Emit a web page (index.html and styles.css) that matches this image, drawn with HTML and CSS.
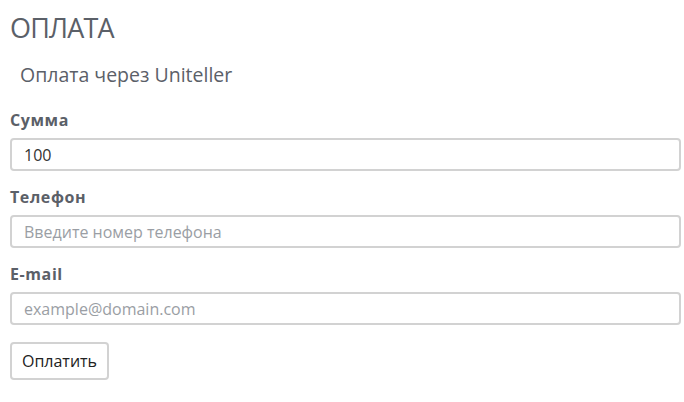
FILE: index.html
```html
<!DOCTYPE html>
<html lang="ru">
<head>
    <meta charset="utf-8">
    <title>Оплата</title>
    <link rel="stylesheet" href="styles.css">
</head>
<body>
    <h1 class="page-title">ОПЛАТА</h1>
    <p class="subtitle">Оплата через Uniteller</p>
    <form class="pay-form">
        <div class="field">
            <label for="sum">Сумма</label>
            <input type="text" id="sum" value="100">
        </div>
        <div class="field">
            <label for="phone">Телефон</label>
            <input type="text" id="phone" placeholder="Введите номер телефона">
        </div>
        <div class="field">
            <label for="email">E-mail</label>
            <input type="text" id="email" placeholder="example@domain.com">
        </div>
        <button type="button" class="pay-btn">Оплатить</button>
    </form>
</body>
</html>
```

FILE: styles.css
```css
body {
    margin: 0;
    padding: 0 3px 0 10px;
    background: #fff;
    color: #5b6068;
    font-family: "Open Sans", "Noto Sans", sans-serif;
}
.page-title {
    margin: 0;
    padding-top: 11px;
    font-size: 27px;
    font-weight: 400;
    line-height: 34px;
    letter-spacing: -0.8px;
}
.subtitle {
    margin: 0;
    padding: 17px 0 0 10px;
    font-size: 19.5px;
    line-height: 26px;
}
.pay-form {
    display: flex;
    flex-direction: column;
    align-items: flex-start;
    padding-top: 21px;
}
.field {
    display: flex;
    flex-direction: column;
    width: 100%;
    margin-bottom: 15px;
}
.field label {
    font-size: 16px;
    font-weight: 700;
    letter-spacing: 0.6px;
    line-height: 22px;
    margin-bottom: 7px;
}
.field input {
    box-sizing: border-box;
    height: 33px;
    padding: 0 12px;
    border: 2px solid #d2d2d2;
    border-radius: 4px;
    font-family: "Open Sans", "Noto Sans", sans-serif;
    font-size: 16px;
    color: #333;
}
.field input::placeholder {
    color: #9a9ea4;
}
.pay-btn {
    margin-top: 2px;
    height: 38px;
    width: 99px;
    padding: 0;
    background: #fff;
    border: 2px solid #d2d2d2;
    border-radius: 4px;
    font-family: "Open Sans", "Noto Sans", sans-serif;
    font-size: 16px;
    color: #222;
}
```
